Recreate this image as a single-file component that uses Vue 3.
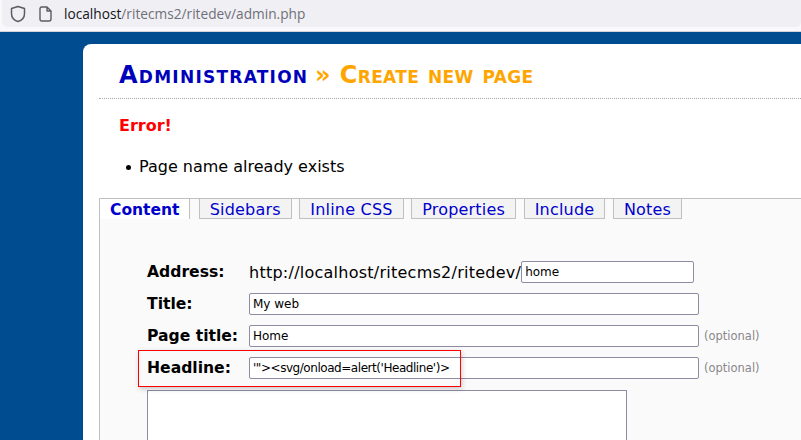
<script setup>
const tabs = ["Content", "Sidebars", "Inline CSS", "Properties", "Include", "Notes"];
</script>

<template>
  <div class="page">
    <div class="browser">
      <div class="urlbar">
        <svg class="ico" width="16" height="18" viewBox="0 0 16 18">
          <path d="M8 1.5 L14.5 3.5 V8.5 C14.5 12.5 11.5 15.5 8 16.5 C4.5 15.5 1.5 12.5 1.5 8.5 V3.5 Z" fill="none" stroke="#5b5b66" stroke-width="1.5" stroke-linejoin="round" />
        </svg>
        <svg class="ico doc" width="13" height="16" viewBox="0 0 13 16">
          <path d="M2.5 1 H8 L12 5 V13 C12 14.2 11.2 15 10 15 H2.5 C1.5 15 1 14.2 1 13 V3 C1 1.8 1.5 1 2.5 1 Z M8 1 V5 H12" fill="none" stroke="#5b5b66" stroke-width="1.4" stroke-linejoin="round" />
        </svg>
        <span class="url"><span class="host">localhost</span>/ritecms2/ritedev/admin.php</span>
      </div>
    </div>

    <div class="main">
      <div class="card">
        <h1 class="heading">
          <span class="crumb">Administration</span>
          <span class="current"> » Create new page</span>
        </h1>

        <div class="error">
          <p class="error-title">Error!</p>
          <ul class="error-list">
            <li>Page name already exists</li>
          </ul>
        </div>

        <div class="panel">
          <div class="tabs">
            <a v-for="(tab, i) in tabs" :key="tab" class="tab" :class="{ active: i === 0 }">{{ tab }}</a>
          </div>

          <div class="form">
            <div class="row address">
              <label>Address:</label>
              <span class="base">http://localhost/ritecms2/ritedev/</span>
              <input class="field page-name" value="home" />
            </div>
            <div class="row">
              <label>Title:</label>
              <input class="field wide" value="My web" />
            </div>
            <div class="row">
              <label>Page title:</label>
              <input class="field wide" value="Home" />
              <span class="opt">(optional)</span>
            </div>
            <div class="row highlighted">
              <label>Headline:</label>
              <input class="field wide headline" value="'&quot;>&lt;svg/onload=alert('Headline')>" />
              <span class="opt">(optional)</span>
              <div class="redbox"></div>
            </div>
            <textarea class="content"></textarea>
          </div>
        </div>
      </div>
    </div>
  </div>
</template>

<style>
html,
body {
  margin: 0;
  overflow: hidden;
}
</style>

<style scoped>
.page {
  width: 801px;
  height: 440px;
  overflow: hidden;
  background: #004c91;
  font-family: "DejaVu Sans", Verdana, sans-serif;
  display: flex;
  flex-direction: column;
}

.browser {
  height: 31px;
  flex: none;
  background: #f9f9fb;
  border-bottom: 1px solid #d4d4d8;
}

.urlbar {
  height: 27px;
  margin-left: 2px;
  background: #f0f0f4;
  border-radius: 0 0 5px 5px;
  display: flex;
  align-items: center;
  padding-left: 8px;
  box-sizing: border-box;
}

.doc {
  margin-left: 13px;
}

.url {
  margin-left: 12px;
  font-family: "Open Sans", sans-serif;
  font-size: 13.7px;
  color: #6f6f78;
}

.host {
  color: #15141a;
}

.main {
  flex: 1;
  padding: 12px 0 0 83px;
  min-height: 0;
}

.card {
  background: #fff;
  border-radius: 8px 0 0 0;
  height: 100%;
  padding: 1px 0 0 16px;
  box-sizing: border-box;
}

.heading {
  margin: 0;
  padding: 14px 0 0 20px;
  height: 39px;
  box-sizing: content-box;
  border-bottom: 1px dotted #aaa;
  font-size: 24px;
  line-height: 32px;
  font-variant: small-caps;
  font-weight: 700;
  white-space: nowrap;
}

.crumb {
  color: #0000bb;
  letter-spacing: 1.25px;
}

.current {
  color: #ffa500;
  letter-spacing: 0.37px;
  margin-left: -2px;
}

.error {
  padding-left: 20px;
  height: 99px;
}

.error-title {
  margin: 0;
  padding-top: 17px;
  font-size: 16px;
  line-height: 20px;
  font-weight: 700;
  color: #f00;
}

.error-list {
  margin: 21px 0 0;
  padding: 0 0 0 7px;
  list-style: none;
  font-size: 16px;
  line-height: 20px;
  color: #000;
}

.error-list li {
  display: flex;
  align-items: center;
  gap: 8px;
}

.error-list li::before {
  content: "";
  width: 5px;
  height: 5px;
  border-radius: 50%;
  background: #000;
}

.panel {
  background: #fafafa;
  border-top: 1px solid #c0c0c0;
  border-left: 1px solid #c0c0c0;
  height: 260px;
}

.tabs {
  display: flex;
  gap: 7.6px;
  height: 20px;
}

.tab {
  box-sizing: border-box;
  padding: 0 10px;
  height: 20px;
  line-height: 21px;
  font-size: 16px;
  letter-spacing: 0.2px;
  color: #0000cc;
  background: #f3f3f3;
  border: 1px solid #c0c0c0;
  border-top: 0;
  white-space: nowrap;
}

.tab.active {
  background: #fff;
  font-size: 15.5px;
  line-height: 22px;
  letter-spacing: 0;
  font-weight: 700;
  border-left: 0;
  border-bottom: 0;
  margin-right: 0.6px;
}

.form {
  padding: 39px 0 0 47px;
}

.row {
  display: flex;
  align-items: center;
  height: 32px;
  position: relative;
}

.row.address {
  height: 28px;
  margin-bottom: 2px;
}

.row label {
  width: 102px;
  flex: none;
  font-size: 15.6px;
  font-weight: 700;
  color: #000;
  white-space: nowrap;
}

.base {
  font-size: 16px;
  letter-spacing: 0.25px;
  color: #000;
  white-space: nowrap;
}

.field {
  box-sizing: border-box;
  height: 22px;
  padding: 0 3px;
  border: 1px solid #8f8ba3;
  border-radius: 2px;
  background: #fff;
  font-family: "DejaVu Sans", Verdana, sans-serif;
  font-size: 12px;
  color: #000;
  outline: none;
}

.page-name {
  width: 173px;
}

.wide {
  width: 450px;
}

.headline {
  letter-spacing: -0.45px;
}

.opt {
  margin-left: 5px;
  font-size: 11.5px;
  color: #888;
}

.redbox {
  position: absolute;
  left: -9px;
  top: -2px;
  width: 321px;
  height: 35px;
  border: 1px solid #f00;
  box-shadow: 1px 2px 5px rgba(0, 0, 0, 0.2);
  pointer-events: none;
}

.content {
  display: block;
  box-sizing: border-box;
  margin-top: 6px;
  width: 480px;
  height: 80px;
  border: 1px solid #8f8ba3;
  border-radius: 0;
  background: #fff;
  resize: none;
  outline: none;
}
</style>
